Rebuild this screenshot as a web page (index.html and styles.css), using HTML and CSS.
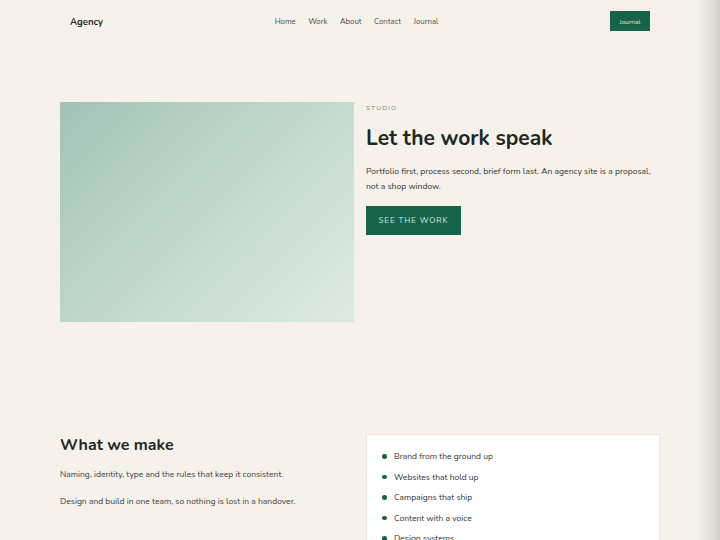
FILE: index.html
```html
<!DOCTYPE html>
<html lang="en">
<head>
<meta charset="utf-8">
<title>Agency</title>
<link rel="stylesheet" href="styles.css">
</head>
<body>
<header class="nav wrap">
  <div class="brand">Agency</div>
  <nav class="links">
    <a href="#">Home</a>
    <a href="#">Work</a>
    <a href="#">About</a>
    <a href="#">Contact</a>
    <a href="#">Journal</a>
  </nav>
  <a class="nav-btn" href="#">Journal</a>
</header>

<section class="hero wrap">
  <div class="hero-img"></div>
  <div class="hero-text">
    <div class="eyebrow">STUDIO</div>
    <h1>Let the work speak</h1>
    <p>Portfolio first, process second, brief form last. An agency site is a proposal, not a shop window.</p>
    <a class="cta" href="#">SEE THE WORK</a>
  </div>
</section>

<section class="make wrap">
  <div class="make-text">
    <h2>What we make</h2>
    <p>Naming, identity, type and the rules that keep it consistent.</p>
    <p>Design and build in one team, so nothing is lost in a handover.</p>
  </div>
  <div class="card">
    <ul>
      <li>Brand from the ground up</li>
      <li>Websites that hold up</li>
      <li>Campaigns that ship</li>
      <li>Content with a voice</li>
      <li>Design systems</li>
    </ul>
  </div>
</section>
<div class="edge"></div>
</body>
</html>
```
FILE: styles.css
```css
html, body {
  margin: 0;
  padding: 0;
  background: #f6f2eb;
  overflow: hidden;
}
body {
  font-family: "Nunito", "Lato", "Noto Sans", sans-serif;
  color: #1e2825;
  height: 540px;
}
.wrap {
  width: 600px;
  margin: 0 auto;
  box-sizing: border-box;
}
.nav {
  height: 42px;
  padding: 0 10px;
  display: flex;
  align-items: center;
  justify-content: space-between;
}
.brand {
  font-size: 9.5px;
  font-weight: 700;
  color: #1e2825;
}
.links {
  display: flex;
  gap: 12.5px;
}
.links a {
  font-size: 7.8px;
  color: #4a4f4c;
  text-decoration: none;
}
.nav-btn {
  background: #17634a;
  color: #dfece6;
  font-size: 6.5px;
  text-decoration: none;
  width: 40px;
  height: 20px;
  display: flex;
  align-items: center;
  justify-content: center;
}
.hero {
  margin-top: 60px;
  display: grid;
  grid-template-columns: 294px 294px;
  gap: 12px;
}
.hero-img {
  height: 220px;
  background: linear-gradient(135deg, #a2c2b6 0%, #bfd6cb 45%, #deebe4 100%);
}
.eyebrow {
  font-size: 6.5px;
  letter-spacing: 1.2px;
  color: #7b7f7c;
  margin-top: 2px;
  line-height: 8px;
}
h1 {
  margin: 12px 0 0;
  font-size: 21px;
  font-weight: 700;
  line-height: 28px;
  color: #1e2825;
}
.hero-text p {
  margin: 12px 0 0;
  font-size: 8.55px;
  line-height: 15px;
  color: #2f3532;
}
.cta {
  display: inline-flex;
  align-items: center;
  justify-content: center;
  margin-top: 12px;
  width: 95px;
  height: 29px;
  background: #17634a;
  color: #d8e9e1;
  font-size: 8px;
  letter-spacing: 0.9px;
  text-decoration: none;
}
.make {
  margin-top: 112px;
  display: grid;
  grid-template-columns: 294px 294px;
  gap: 12px;
}
h2 {
  margin: 0;
  font-size: 16px;
  font-weight: 700;
  line-height: 20px;
  color: #1e2825;
  padding-top: 1px;
}
.make-text p {
  margin: 0;
  font-size: 8.5px;
  line-height: 12px;
  color: #3a403d;
}
.make-text h2 + p { margin-top: 13px; }
.make-text p + p { margin-top: 15px; }
.card {
  background: #ffffff;
  border: 1px solid #ebe6df;
  border-bottom: none;
  height: 120px;
  box-sizing: border-box;
}
.card ul {
  list-style: none;
  margin: 0;
  padding: 15px 0 0 15px;
}
.card li {
  position: relative;
  padding-left: 12px;
  font-size: 8.5px;
  line-height: 12px;
  color: #2f3532;
  margin-bottom: 8.6px;
}
.card li::before {
  content: "";
  position: absolute;
  left: 0;
  top: 4px;
  width: 4.5px;
  height: 4.5px;
  border-radius: 50%;
  background: #17634a;
}
.edge {
  position: fixed;
  top: 0;
  right: 0;
  width: 22px;
  height: 540px;
  background: linear-gradient(90deg, rgba(210,205,198,0) 0%, rgba(210,205,198,0.5) 60%, rgba(205,200,193,0.9) 100%);
  pointer-events: none;
}
```
